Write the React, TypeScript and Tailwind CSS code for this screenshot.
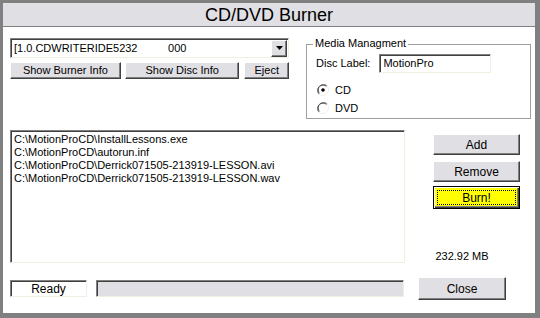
import React from "react";

const font = { fontFamily: '"Liberation Sans", Arial, sans-serif' };

const raised =
  "border border-t-white border-l-white border-r-[#404040] border-b-[#404040] shadow-[inset_-1px_-1px_0_#808080] bg-[#e0dfe3]";
const sunken =
  "border border-t-[#808080] border-l-[#808080] border-r-[#f1efe2] border-b-[#f1efe2] shadow-[inset_1px_1px_0_#404040]";

type BtnProps = { label: string; className?: string };

const Button = ({ label, className = "" }: BtnProps) => (
  <div
    className={`${raised} flex items-center justify-center text-[12px] text-black leading-none ${className}`}
  >
    {label}
  </div>
);

const Radio = ({ checked }: { checked: boolean }) => (
  <svg width="12" height="12" viewBox="0 0 12 12">
    <path d="M10.2 1.8 A6 6 0 0 0 1.8 10.2" fill="none" stroke="#808080" strokeWidth="1" />
    <path d="M9.4 2.6 A4.8 4.8 0 0 0 2.6 9.4" fill="none" stroke="#404040" strokeWidth="1" />
    <path d="M1.8 10.2 A6 6 0 0 0 10.2 1.8" fill="none" stroke="#f1efe2" strokeWidth="1" />
    <circle cx="6" cy="6" r="4.2" fill="#fff" />
    {checked && <circle cx="6" cy="6" r="1.8" fill="#000" />}
  </svg>
);

const files = [
  "C:\\MotionProCD\\InstallLessons.exe",
  "C:\\MotionProCD\\autorun.inf",
  "C:\\MotionProCD\\Derrick071505-213919-LESSON.avi",
  "C:\\MotionProCD\\Derrick071505-213919-LESSON.wav",
];

export default function App() {
  return (
    <div
      className="w-[540px] h-[318px] bg-[#808080] pt-[3px] pl-[3px] pr-[5px] pb-[5px] flex flex-col text-black"
      style={font}
    >
      {/* title */}
      <div className="h-[24px] bg-[#e0dfe3] border-b border-[#808080] flex items-center justify-center text-[18px] leading-none">
        CD/DVD Burner
      </div>

      {/* body */}
      <div className="flex-1 bg-white flex flex-col text-[11px]">
        {/* top row */}
        <div className="flex items-start pt-[11px] pl-[7px] h-[91px]">
          <div className="w-[279px] flex flex-col">
            <div className={`${sunken} h-[20px] bg-white flex items-center justify-between pl-[3px] pr-[1px]`}>
              <span className="text-[11px] leading-none whitespace-pre">[1.0.CDWRITERIDE5232          000</span>
              <div className={`${raised} w-[16px] h-[17px] flex items-center justify-center`}>
                <svg width="7" height="4" viewBox="0 0 7 4">
                  <path d="M0 0 H7 L3.5 4 Z" fill="#000" />
                </svg>
              </div>
            </div>
            <div className="flex mt-[4px] gap-[4px]">
              <Button label="Show Burner Info" className="w-[112px] h-[17px] !text-[11px]" />
              <Button label="Show Disc Info" className="w-[116px] h-[17px] !text-[11px]" />
              <Button label="Eject" className="w-[45px] h-[17px] ml-[1px] !text-[11px]" />
            </div>
          </div>

          {/* group box */}
          <div className="ml-[17px] mt-[6px] w-[225px] h-[75px] border border-[#a0a0a0] relative">
            <span className="absolute -top-[7px] left-[6px] bg-white px-[2px] text-[11px] leading-none">
              Media Managment
            </span>
            <div className="flex items-center mt-[9px] ml-[9px]">
              <span className="text-[11px] leading-none">Disc Label:</span>
              <div className={`${sunken} ml-[9px] w-[112px] h-[19px] flex items-center pl-[3px]`}>
                <span className="text-[11px] leading-none">MotionPro</span>
              </div>
            </div>
            <div className="flex items-center mt-[11px] ml-[10px] gap-[6px]">
              <Radio checked />
              <span className="text-[11px] leading-none">CD</span>
            </div>
            <div className="flex items-center mt-[6px] ml-[10px] gap-[6px]">
              <Radio checked={false} />
              <span className="text-[11px] leading-none">DVD</span>
            </div>
          </div>
        </div>

        {/* middle row */}
        <div className="flex mt-[12px] pl-[7px]">
          <div className={`${sunken} w-[395px] h-[133px] pt-[2px] pl-[3px]`}>
            {files.map((f) => (
              <div key={f} className="text-[11px] leading-[13px] h-[13px]">
                {f}
              </div>
            ))}
          </div>
          <div className="ml-[13px] w-[102px] flex flex-col">
            <Button label="Add" className="ml-[15px] mt-[4px] w-[87px] h-[21px]" />
            <Button label="Remove" className="ml-[15px] mt-[6px] w-[87px] h-[21px]" />
            <div className="ml-[15px] mt-[4px] w-[87px] h-[23px] border border-black bg-[#ffff00] shadow-[inset_1px_1px_0_#fff,inset_-1px_-1px_0_#404040,inset_-2px_-2px_0_#808080] p-[3px]">
              <div className="w-full h-full border border-dotted border-black flex items-center justify-center text-[12px] leading-none">
                Burn!
              </div>
            </div>
            <div className="mt-auto w-[88px] text-center text-[11px] leading-none mb-[1px]">232.92 MB</div>
          </div>
        </div>

        {/* bottom row */}
        <div className="flex items-center mt-[14px] pl-[7px]">
          <div className={`${sunken} w-[77px] h-[17px] flex items-center justify-center text-[12px] leading-none`}>
            Ready
          </div>
          <div className={`${sunken} ml-[9px] w-[308px] h-[17px] bg-[#e0dfe3]`} />
          <Button label="Close" className="ml-[14px] w-[88px] h-[23px]" />
        </div>
      </div>
    </div>
  );
}
